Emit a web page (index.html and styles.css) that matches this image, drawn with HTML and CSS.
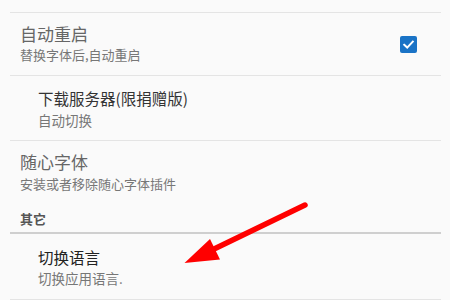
FILE: index.html
```html
<!DOCTYPE html>
<html>
<head>
<meta charset="utf-8">
<link rel="stylesheet" href="styles.css">
</head>
<body>
<div class="screen">
  <div class="divider first"></div>
  <div class="pref pref-check">
    <div class="pref-text">
      <div class="title big muted">自动重启</div>
      <div class="summary">替换字体后,自动重启</div>
    </div>
    <div class="checkbox">
      <svg viewBox="0 0 17 17" width="17" height="17"><path d="M4.2 8.8 L7.2 11.6 L12.8 5.6" fill="none" stroke="#fff" stroke-width="2" stroke-linecap="square"/></svg>
    </div>
  </div>
  <div class="divider"></div>
  <div class="pref indent row2">
    <div class="title mid">下载服务器(限捐赠版)</div>
    <div class="summary s2">自动切换</div>
  </div>
  <div class="divider"></div>
  <div class="pref row3">
    <div class="title big muted">随心字体</div>
    <div class="summary s3">安装或者移除随心字体插件</div>
  </div>
  <div class="category">其它</div>
  <div class="divider strong"></div>
  <div class="pref indent row4">
    <div class="title mid dark">切换语言</div>
    <div class="summary s4">切换应用语言.</div>
  </div>
  <div class="divider"></div>
  <svg class="arrow" width="450" height="300" viewBox="0 0 450 300">
    <line x1="305" y1="205" x2="212" y2="250" stroke="#ff0000" stroke-width="5.5" stroke-linecap="round"/>
    <polygon points="184.5,263 210,239 220,259.5" fill="#ff0000"/>
  </svg>
</div>
</body>
</html>
```
FILE: styles.css
```css
html, body {
  margin: 0;
  padding: 0;
  background: #fafafa;
}
.screen {
  position: relative;
  width: 450px;
  height: 300px;
  overflow: hidden;
  font-family: "Noto Sans CJK SC", "Noto Sans", sans-serif;
  padding-top: 12px;
  box-sizing: border-box;
}
.divider {
  height: 1px;
  background: #e4e4e4;
  margin: 0 9px 0 10px;
}
.divider.strong {
  height: 2px;
  background: #cfcfcf;
  margin-top: 4px;
}
.pref {
  padding-left: 20px;
}
.pref.indent {
  padding-left: 38px;
}
.pref-check {
  display: flex;
  align-items: center;
  justify-content: space-between;
  padding: 11px 33px 11px 20px;
}
.title {
  line-height: 20px;
  white-space: nowrap;
}
.title.big {
  font-size: 17px;
}
.title.mid {
  font-size: 15.5px;
  color: #333;
}
.title.muted {
  color: #666;
}
.title.dark {
  color: #222;
}
.summary {
  font-size: 13px;
  line-height: 18px;
  color: #777;
  margin-top: 2px;
  white-space: nowrap;
}
.summary.s2, .summary.s4 {
  font-size: 13.5px;
}
.checkbox {
  width: 17px;
  height: 17px;
  border-radius: 2px;
  background: #1a73c6;
  display: flex;
}
.row2 {
  padding-top: 12px;
  padding-bottom: 11px;
}
.row2 .summary { margin-top: 3px; }
.row3 {
  padding-top: 10.5px;
}
.row3 .summary { margin-top: 3.5px; }
.category {
  font-size: 13px;
  line-height: 18px;
  font-weight: bold;
  color: #555;
  padding-left: 20px;
  margin-top: 17px;
}
.row4 {
  padding-top: 13px;
  padding-bottom: 12px;
}
.arrow {
  position: absolute;
  left: 0;
  top: 0;
  pointer-events: none;
}
```
